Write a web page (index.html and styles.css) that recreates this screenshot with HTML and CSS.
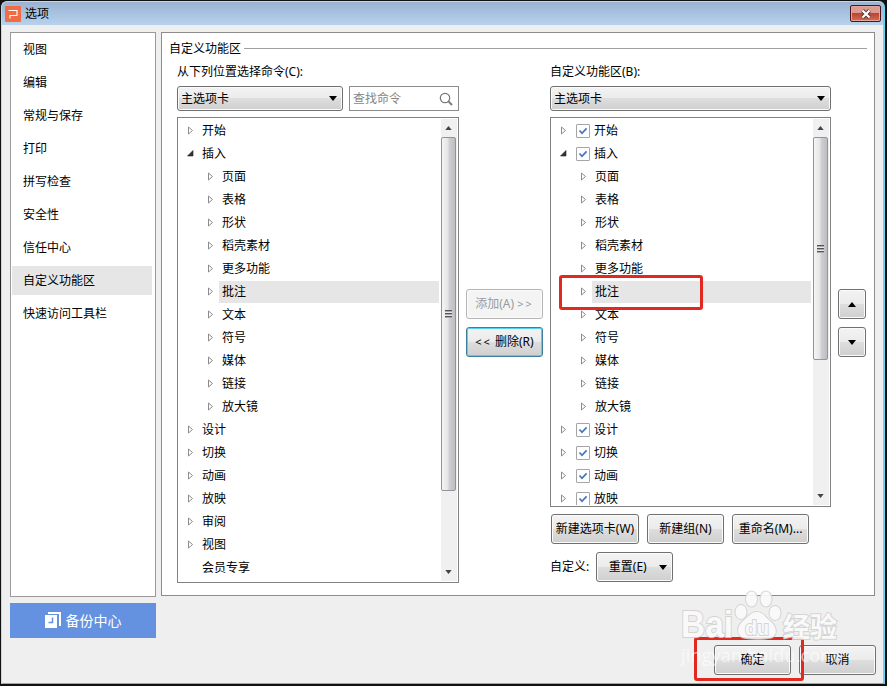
FILE: index.html
```html
<!DOCTYPE html>
<html lang="zh-CN">
<head>
    <meta charset="UTF-8">
    <meta name="viewport" content="width=device-width, initial-scale=1.0">
    <title>选项</title>
    <link rel="stylesheet" href="styles.css">
</head>
<body>
    <!-- Icônes partagées -->
    <svg class="symbols">
        <symbol id="closed" viewBox="0 0 7 9"><path d="M1.5 1v7L5.5 4.5z" fill="#fff" stroke="#8c8c8c"/></symbol>
        <symbol id="open" viewBox="0 0 7 9"><path d="M6 1.5V7H.5z" fill="#333" stroke="#222" stroke-width=".6"/></symbol>
        <symbol id="down" viewBox="0 0 8 5"><path d="M0 0h8L4 5z"/></symbol>
        <symbol id="up" viewBox="0 0 8 5"><path d="M0 5h8L4 0z"/></symbol>
        <symbol id="check" viewBox="0 0 12 12"><path d="M2.5 5.5L5 8.3l4.6-5" fill="none" stroke="#4674c4" stroke-width="1.7"/></symbol>
    </svg>

    <div class="window">
        <header class="titlebar">
            <svg class="logo" viewBox="0 0 16 16"><rect width="16" height="16" rx="1" fill="#f16b45"/><path d="M3.5 4.500h8.500v5h-7v3" fill="none" stroke="#fff" stroke-width="1.100"/></svg>
            <h1>选项</h1>
            <button class="close"><svg viewBox="0 0 12 10"><path d="M2.5 1.5l7 7m0-7l-7 7" stroke="#54383a" stroke-width="4"/><path d="M2.5 1.5l7 7m0-7l-7 7" stroke="#fff" stroke-width="2.2"/></svg></button>
        </header>

        <div class="content">
            <aside class="side">
                <nav class="menu">
                    <a>视图</a>
                    <a>编辑</a>
                    <a>常规与保存</a>
                    <a>打印</a>
                    <a>拼写检查</a>
                    <a>安全性</a>
                    <a>信任中心</a>
                    <a class="active">自定义功能区</a>
                    <a>快速访问工具栏</a>
                </nav>
                <button class="backup">
                    <svg viewBox="0 0 16 17"><path d="M3 1h12v13" fill="none" stroke="#fff" stroke-width="2"/><path d="M0 3h12v13H0z" fill="#fff"/><path d="M7.5 5.5v5h-4" fill="none" stroke="#6492e0" stroke-width="1.5"/></svg>
                    备份中心
                </button>
            </aside>

            <main class="main">
                <section class="panel">
                    <h2>自定义功能区</h2>
                    <div class="columns">
                        <!-- Commandes disponibles -->
                        <div class="source">
                            <label>从下列位置选择命令(C):</label>
                            <div class="filters">
                                <button class="btn select">主选项卡<svg><use href="#down"/></svg></button>
                                <div class="search">查找命令<svg viewBox="0 0 14 14"><circle cx="6" cy="6" r="4.7"/><path d="M9.4 9.4L13 13" stroke-width="1.8"/></svg></div>
                            </div>
                            <div class="tree">
                                <ul>
                                    <li><svg><use href="#closed"/></svg><span>开始</span></li>
                                    <li><svg><use href="#open"/></svg><span>插入</span></li>
                                    <li class="sub"><svg><use href="#closed"/></svg><span>页面</span></li>
                                    <li class="sub"><svg><use href="#closed"/></svg><span>表格</span></li>
                                    <li class="sub"><svg><use href="#closed"/></svg><span>形状</span></li>
                                    <li class="sub"><svg><use href="#closed"/></svg><span>稻壳素材</span></li>
                                    <li class="sub"><svg><use href="#closed"/></svg><span>更多功能</span></li>
                                    <li class="sub selected"><svg><use href="#closed"/></svg><span>批注</span></li>
                                    <li class="sub"><svg><use href="#closed"/></svg><span>文本</span></li>
                                    <li class="sub"><svg><use href="#closed"/></svg><span>符号</span></li>
                                    <li class="sub"><svg><use href="#closed"/></svg><span>媒体</span></li>
                                    <li class="sub"><svg><use href="#closed"/></svg><span>链接</span></li>
                                    <li class="sub"><svg><use href="#closed"/></svg><span>放大镜</span></li>
                                    <li><svg><use href="#closed"/></svg><span>设计</span></li>
                                    <li><svg><use href="#closed"/></svg><span>切换</span></li>
                                    <li><svg><use href="#closed"/></svg><span>动画</span></li>
                                    <li><svg><use href="#closed"/></svg><span>放映</span></li>
                                    <li><svg><use href="#closed"/></svg><span>审阅</span></li>
                                    <li><svg><use href="#closed"/></svg><span>视图</span></li>
                                    <li><svg></svg><span>会员专享</span></li>
                                </ul>
                                <div class="scrollbar">
                                    <svg><use href="#up"/></svg>
                                    <div class="thumb"><i></i></div>
                                    <svg><use href="#down"/></svg>
                                </div>
                            </div>
                        </div>

                        <div class="transfer">
                            <button class="btn" disabled>添加(A) <b>&gt;&gt;</b></button>
                            <button class="btn focus"><b>&lt;&lt;</b> 删除(R)</button>
                        </div>

                        <!-- Ruban personnalisé -->
                        <div class="target">
                            <label>自定义功能区(B):</label>
                            <button class="btn select">主选项卡<svg><use href="#down"/></svg></button>
                            <div class="tree checked">
                                <ul>
                                    <li><svg><use href="#closed"/></svg><svg class="box"><use href="#check"/></svg><span>开始</span></li>
                                    <li><svg><use href="#open"/></svg><svg class="box"><use href="#check"/></svg><span>插入</span></li>
                                    <li class="sub"><svg><use href="#closed"/></svg><span>页面</span></li>
                                    <li class="sub"><svg><use href="#closed"/></svg><span>表格</span></li>
                                    <li class="sub"><svg><use href="#closed"/></svg><span>形状</span></li>
                                    <li class="sub"><svg><use href="#closed"/></svg><span>稻壳素材</span></li>
                                    <li class="sub"><svg><use href="#closed"/></svg><span>更多功能</span></li>
                                    <li class="sub selected"><svg><use href="#closed"/></svg><span>批注</span></li>
                                    <li class="sub"><svg><use href="#closed"/></svg><span>文本</span></li>
                                    <li class="sub"><svg><use href="#closed"/></svg><span>符号</span></li>
                                    <li class="sub"><svg><use href="#closed"/></svg><span>媒体</span></li>
                                    <li class="sub"><svg><use href="#closed"/></svg><span>链接</span></li>
                                    <li class="sub"><svg><use href="#closed"/></svg><span>放大镜</span></li>
                                    <li><svg><use href="#closed"/></svg><svg class="box"><use href="#check"/></svg><span>设计</span></li>
                                    <li><svg><use href="#closed"/></svg><svg class="box"><use href="#check"/></svg><span>切换</span></li>
                                    <li><svg><use href="#closed"/></svg><svg class="box"><use href="#check"/></svg><span>动画</span></li>
                                    <li><svg><use href="#closed"/></svg><svg class="box"><use href="#check"/></svg><span>放映</span></li>
                                </ul>
                                <div class="scrollbar">
                                    <svg><use href="#up"/></svg>
                                    <div class="thumb short"><i></i></div>
                                    <svg><use href="#down"/></svg>
                                </div>
                            </div>
                            <div class="actions">
                                <button class="btn wide">新建选项卡(W)</button>
                                <button class="btn">新建组(N)</button>
                                <button class="btn">重命名(M)...</button>
                            </div>
                            <div class="reset">
                                自定义:
                                <button class="btn">重置(E)<svg><use href="#down"/></svg></button>
                            </div>
                        </div>

                        <div class="order">
                            <button class="btn"><svg><use href="#up"/></svg></button>
                            <button class="btn"><svg><use href="#down"/></svg></button>
                        </div>
                    </div>
                </section>

                <footer class="footer">
                    <button class="btn">确定</button>
                    <button class="btn">取消</button>
                </footer>
            </main>
        </div>
    </div>

    <!-- Repères rouges et filigrane par-dessus la fenêtre -->
    <div class="mark mark-item"></div>
    <div class="mark mark-ok"></div>
    <svg class="watermark" viewBox="0 0 170 90">
        <g class="brand">
            <ellipse cx="65" cy="27" rx="5.5" ry="7"/>
            <ellipse cx="75.5" cy="14" rx="5.5" ry="7.5"/>
            <ellipse cx="90" cy="14" rx="5.5" ry="7.5"/>
            <ellipse cx="99" cy="28" rx="5.5" ry="7"/>
            <path d="M81 27c6 0 8 5 13 9 8 6 8 17-2 17-7 1-15 1-22 0-10-1-10-11-3-17 5-4 8-9 14-9z"/>
            <text class="bai" x="5" y="52" textLength="52" lengthAdjust="spacingAndGlyphs">Bai</text>
            <text class="du" x="69" y="50" textLength="24" lengthAdjust="spacingAndGlyphs">du</text>
            <text class="jy" x="107" y="52">经验</text>
        </g>
        <text class="url" x="5" y="77" textLength="156">jingyan.baidu.com</text>
    </svg>
</body>
</html>
```
FILE: styles.css
```css
/* Base */
* {
    box-sizing: border-box;
}

body {
    margin: 0;
    height: 686px;
    overflow: hidden;
    background: #111;
    position: relative;
    color: #000;
    font: 12px/18px "Noto Sans", "Noto Sans CJK SC", sans-serif;
}

button {
    font: inherit;
    color: inherit;
    padding: 0;
}

ul {
    list-style: none;
    margin: 0;
    padding: 0;
}

.symbols {
    display: none;
}

/* Fenêtre */
.window {
    display: flex;
    flex-direction: column;
    width: 884px;
    height: 683px;
    margin: 1px;
    background: #efefef;
    border: 1px solid #d5d0e0;
    border-right: 2px solid #69d4ef;
    border-bottom-color: #65bccb;
    border-radius: 6px 6px 0 0;
    overflow: hidden;
}

.titlebar {
    display: flex;
    align-items: center;
    height: 23px;
    flex: none;
    padding: 0 2px 0 3px;
    background: linear-gradient(#9ab3d2, #b8d1ec);
}

.logo {
    width: 16px;
    height: 16px;
}

.titlebar h1 {
    margin: 0 auto 0 4px;
    font-size: 12px;
    font-weight: normal;
}

.close {
    display: flex;
    align-items: center;
    justify-content: center;
    width: 31px;
    height: 17px;
    border: 1px solid #45161c;
    border-radius: 2px;
    box-shadow: inset 0 0 0 1px #e3a69c;
    background: linear-gradient(#dd9a90 45%, #bd4431 50%, #d16e56);
}

.close svg {
    width: 12px;
    height: 10px;
}

.content {
    display: flex;
    gap: 5px;
    padding: 7px 7px 0 8px;
}

/* Menu latéral */
.side {
    width: 146px;
}

.menu {
    height: 565px;
    padding: 2px 1px;
    background: #fff;
    border: 1px solid #999;
}

.menu a {
    display: block;
    width: 140px;
    height: 29px;
    margin-bottom: 4px;
    padding-left: 11px;
    line-height: 29px;
}

.menu .active {
    background: #e6e6e6;
}

.backup {
    display: flex;
    align-items: center;
    justify-content: center;
    gap: 5px;
    width: 146px;
    height: 35px;
    margin-top: 6px;
    border: 0;
    background: #6492e0;
    color: #fff;
    font-size: 14px;
}

.backup svg {
    width: 16px;
    height: 17px;
}

/* Panneau principal */
.main {
    width: 715px;
}

.panel {
    width: 714px;
    height: 564px;
    padding: 7px 7px 0;
    background: #fff;
    border: 1px solid #8c8c8c;
}

.panel h2 {
    display: flex;
    align-items: center;
    gap: 3px;
    height: 18px;
    margin: 0;
    font-size: 12px;
    font-weight: normal;
}

.panel h2::after {
    content: '';
    flex: 1;
    height: 1px;
    margin-bottom: 2px;
    background: #a0a0a0;
}

.columns {
    display: flex;
    gap: 7px;
    padding: 4px 0 0 8px;
}

.source {
    width: 282px;
}

.target {
    width: 281px;
}

label {
    display: block;
    height: 24px;
    line-height: 20px;
}

.filters {
    display: flex;
    gap: 6px;
}

/* Boutons */
.btn {
    display: flex;
    align-items: center;
    justify-content: center;
    width: 77px;
    height: 30px;
    white-space: pre;
    border: 1px solid #707070;
    border-radius: 3px;
    box-shadow: inset 0 0 0 1px #fbfbfb;
    background: linear-gradient(#f3f3f3, #ebebeb 50%, #dedede 50%, #cfcfcf);
}

.btn b {
    font-weight: normal;
    letter-spacing: 2px;
    font-size: 11px;
}

.btn svg {
    width: 8px;
    height: 5px;
}

.btn:disabled {
    color: #9b9b9b;
    border-color: #b5b5b5;
    background: #f4f4f4;
}

.btn.focus {
    border-color: #3c7fa0;
    box-shadow: inset 0 0 0 1px #55d0ee;
}

.btn.select {
    width: 100%;
    height: 25px;
    padding: 0 5px 0 3px;
    justify-content: space-between;
}

.filters .select {
    width: 166px;
}

.search {
    display: flex;
    align-items: center;
    justify-content: space-between;
    width: 110px;
    height: 25px;
    padding: 0 5px 0 3px;
    border: 1px solid #8c8c8c;
    color: #858585;
}

.search svg {
    width: 14px;
    height: 14px;
    fill: none;
    stroke: #777;
    stroke-width: 1.2;
}

/* Arborescence */
.tree {
    display: flex;
    justify-content: space-between;
    height: 466px;
    margin-top: 6px;
    padding: 1px;
    border: 1px solid #828282;
}

.tree ul {
    width: 260px;
    overflow: hidden;
}

.tree li {
    display: flex;
    align-items: center;
    height: 23px;
    padding-left: 8px;
}

.tree li svg {
    width: 7px;
    height: 9px;
    flex: none;
}

.tree li span {
    flex: 1;
    height: 22px;
    margin-left: 5px;
    padding-left: 3px;
    line-height: 22px;
}

.tree li.sub {
    padding-left: 28px;
}

.tree .selected span {
    background: #e6e6e6;
}

.checked {
    height: 390px;
}

.checked ul {
    width: 259px;
}

.tree li .box {
    width: 14px;
    height: 14px;
    margin-left: 9px;
    border: 1px solid #a5a5a5;
    border-radius: 1px;
}

.checked li:not(.sub) span {
    margin-left: 1px;
}

/* Barre de défilement */
.scrollbar {
    display: flex;
    flex-direction: column;
    align-items: center;
    width: 16px;
    padding: 0 1px 7px 0;
    background: #f0f0f0;
}

.scrollbar svg {
    width: 7px;
    height: 4px;
    margin: 7px 0;
    fill: #444;
}

.scrollbar svg:last-child {
    margin: auto 0 0;
}

.thumb {
    display: flex;
    align-items: center;
    justify-content: center;
    width: 15px;
    height: 354px;
    border: 1px solid #949494;
    border-radius: 2px;
    background: linear-gradient(90deg, #f5f5f5, #e5e5e7 45%, #d0d0d3 55%, #bdbdc2);
}

.thumb.short {
    height: 223px;
}

.thumb i {
    width: 7px;
    height: 8px;
    margin-right: 1px;
    background: repeating-linear-gradient(#555 0 1px, #aaa 1px 2px, #e8e8e8 2px 3px);
}

/* Boutons autour des listes */
.transfer,
.order {
    display: flex;
    flex-direction: column;
    gap: 8px;
    padding-top: 227px;
}

.order .btn {
    width: 28px;
}

.actions {
    display: flex;
    gap: 8px;
    margin: 7px 0 8px 1px;
}

.btn.wide {
    width: 88px;
}

.reset {
    display: flex;
    align-items: center;
    gap: 7px;
    white-space: nowrap;
}

.reset .btn {
    gap: 12px;
    padding-left: 6px;
}

.footer {
    display: flex;
    justify-content: flex-end;
    gap: 8px;
    margin-top: 49px;
}

/* Repères */
.mark {
    position: absolute;
    border: 3px solid #e2291f;
    border-radius: 3px;
}

.mark-item {
    left: 559px;
    top: 275px;
    width: 144px;
    height: 35px;
}

.mark-ok {
    left: 694px;
    top: 637px;
    width: 110px;
    height: 44px;
}

/* Filigrane */
.watermark {
    position: absolute;
    left: 676px;
    top: 585px;
    width: 170px;
    height: 90px;
    pointer-events: none;
}

.brand {
    fill: #fbfbfb;
    stroke: #d2d2d2;
    stroke-width: 2px;
    paint-order: stroke;
    opacity: .9;
}

.watermark .bai,
.watermark .du {
    font: bold 36px "Liberation Sans", sans-serif;
}

.watermark .du {
    font-size: 21px;
}

.watermark .jy {
    font: bold 27px "Noto Sans CJK SC", sans-serif;
}

.watermark .url {
    font: 18px "Open Sans", sans-serif;
    fill: #fff;
    fill-opacity: .6;
}
```
